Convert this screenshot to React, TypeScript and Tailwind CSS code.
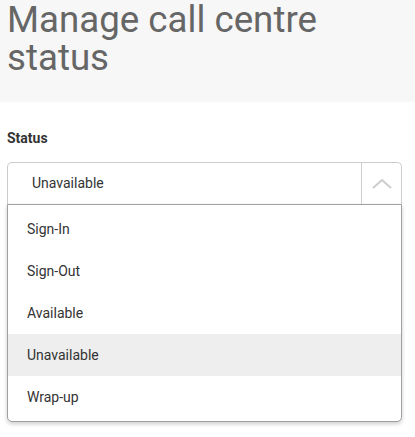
const options = ['Sign-In', 'Sign-Out', 'Available', 'Unavailable', 'Wrap-up']

export default function App() {
  const selected = 'Unavailable'
  return (
    <div className="min-h-screen bg-white font-['Roboto',sans-serif]">
      {/* Header */}
      <header className="bg-[#f7f7f7] h-[102px] px-[7px] pt-[1px]">
        <h1 className="text-[36.7px] leading-[38px] text-[#666666] font-normal">Manage call centre status</h1>
      </header>

      {/* Status select */}
      <section className="px-[7px] pt-[26px]">
        <label className="block text-[14px] font-bold text-[#333333] leading-[20px]">Status</label>
        <div className="mt-[14px] w-[395px]">
          <div className="flex h-[42px] border border-[#cccccc] rounded-t-[5px] border-b-0">
            <div className="flex-1 flex items-center pl-[24px] text-[14px] text-[#333333]">{selected}</div>
            <div className="w-[40px] border-l border-[#cccccc] flex items-center justify-center">
              <svg width="20" height="11" viewBox="0 0 20 11" fill="none">
                <path d="M1 10 L10 2 L19 10" stroke="#cccccc" strokeWidth="2" />
              </svg>
            </div>
          </div>
          <ul className="border border-[#a0a0a0] rounded-b-[5px] py-[3px] bg-white shadow-[0_2px_4px_rgba(0,0,0,0.2)]">
            {options.map((o) => (
              <li
                key={o}
                className={`h-[42px] flex items-center pl-[19px] text-[14px] text-[#333333] ${o === selected ? 'bg-[#eeeeee]' : ''}`}
              >
                {o}
              </li>
            ))}
          </ul>
        </div>
      </section>
    </div>
  )
}
